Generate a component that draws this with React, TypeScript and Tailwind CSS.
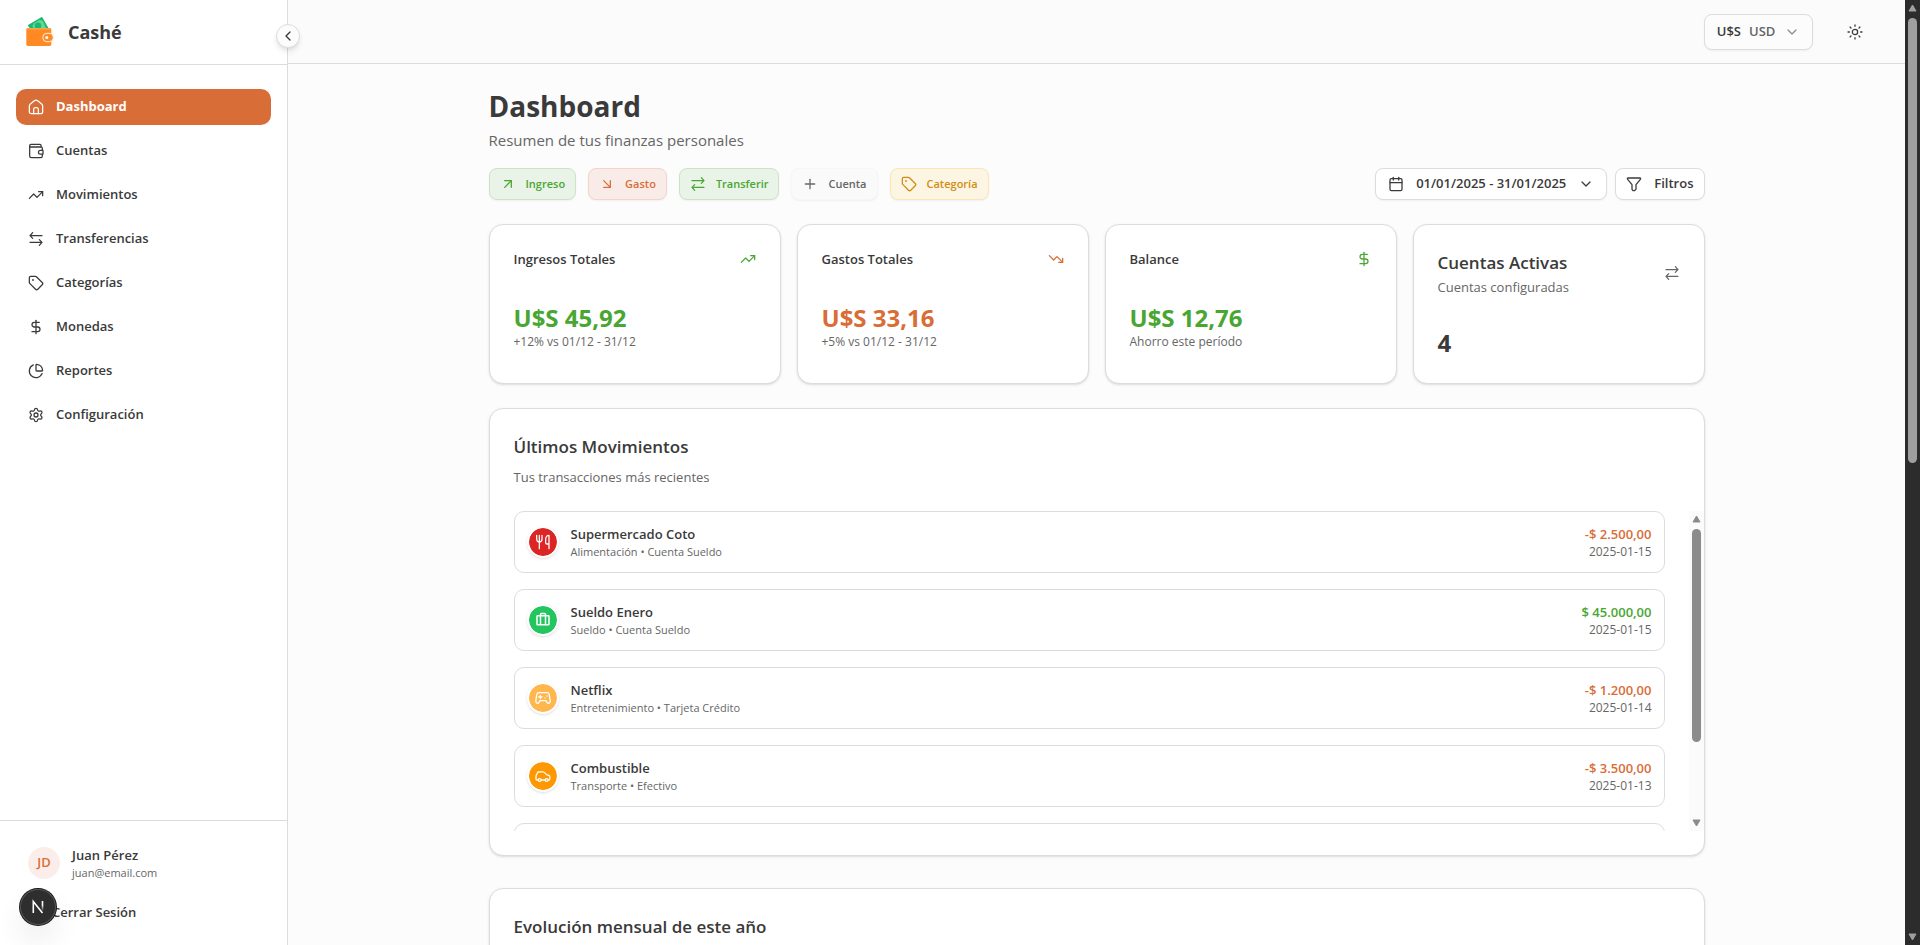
import React from 'react';
import {
  ArrowDownRight, ArrowUpRight, Calendar, ChartPie, ChevronDown, ChevronLeft, DollarSign,
  Plus, Settings, Tag, TrendingDown, TrendingUp,
} from 'lucide-react';
import { PiSuitcaseBold } from 'react-icons/pi';

type IconProps = { className?: string; children?: React.ReactNode };

function Line({ className = 'size-4', children }: IconProps) {
  return (
    <svg viewBox="0 0 24 24" fill="none" stroke="currentColor" strokeWidth="1.9" strokeLinecap="round" strokeLinejoin="round" className={className} aria-hidden="true">
      {children}
    </svg>
  );
}

const Home = (p: IconProps) => (
  <Line {...p}>
    <path d="M5 22a3 3 0 0 1-3-3v-8.300a4 4 0 0 1 1.500-3.100l6-4.800a4 4 0 0 1 5 0l6 4.800a4 4 0 0 1 1.500 3.100V19a3 3 0 0 1-3 3z" />
    <path d="M8.500 22v-6.500a2.500 2.500 0 0 1 2.500-2.500h2a2.500 2.500 0 0 1 2.500 2.500V22" />
  </Line>
);
const WalletIcon = (p: IconProps) => (
  <Line {...p}>
    <path d="M21.500 11V8a2 2 0 0 0-2-2H4.500a2 2 0 0 1 0-4H18a1.500 1.500 0 0 1 1.500 1.500V6M2.500 4v15.500a2.500 2.500 0 0 0 2.500 2.500h14a2.500 2.500 0 0 0 2.500-2.500V17" />
    <path d="M22.500 11.200v5.600h-4a2.800 2.800 0 0 1 0-5.600z" />
  </Line>
);
const SwapLeft = (p: IconProps) => (
  <Line {...p}>
    <path d="M21 7H3.500M7 2.500 3 7l4 4M3 17h17.500M17 13l4 4-4 4.500" />
  </Line>
);
const SwapRight = (p: IconProps) => (
  <Line {...p}>
    <path d="M3 7h17.500M17 2.500l4 4.500-4 4M21 17H3.500M7 13l-4 4 4 4.500" />
  </Line>
);
const SunIcon = (p: IconProps) => (
  <Line {...p}>
    <circle cx="12" cy="12" r="4" />
    <path d="M12 1.500v2M12 20.500v2M1.500 12h2M20.500 12h2M4.600 4.600 6 6M18 18l1.400 1.400M4.600 19.400 6 18M18 6l1.400-1.400" />
  </Line>
);
const FunnelIcon = (p: IconProps) => (
  <Line {...p}>
    <path d="M3 3h18a1 1 0 0 1 .8 1.600L15 13v7l-2.500 2h-2L9 20v-7L2.200 4.600A1 1 0 0 1 3 3z" />
  </Line>
);
const Cutlery = (p: IconProps) => (
  <Line {...p}>
    <path d="M2.500 2v6a4 4 0 0 0 8 0V2M6.500 2v20M21 15h-3a2 2 0 0 1-2-2V8c0-3.500 2-6 5-6zM21 15v7" />
  </Line>
);
const Gamepad = (p: IconProps) => (
  <Line {...p}>
    <path d="M6 4h12a3.500 3.500 0 0 1 3.400 2.800l1.300 9.200c.6 4-3 5.200-4.700 2.600L16.500 16h-9L6 18.600C4.300 21.200.7 20 1.300 16l1.300-9.200A3.500 3.500 0 0 1 6 4z" />
    <path d="M8 8v5M5.500 10.500h5M15 12h.01M18 9h.01" />
  </Line>
);
const Car = (p: IconProps) => (
  <Line {...p}>
    <path d="M4.500 18H3a1.500 1.500 0 0 1-1.500-1.500V12l2.300-5a2 2 0 0 1 1.800-1.200h6.200a3 3 0 0 1 2 .8l4 3.700 2.900.8a2 2 0 0 1 1.500 2v3.400a1.500 1.500 0 0 1-1.500 1.500h-.9M9.500 18h5.300" />
    <circle cx="7" cy="18" r="2.200" />
    <circle cx="17.500" cy="18" r="2.200" />
  </Line>
);

function Logo() {
  return (
    <svg viewBox="0 0 32 32" className="size-8" aria-hidden="true">
      <path d="M4.500 8.700 17.200 1.300a1 1 0 0 1 1.400.4L25 13H6.500L4 9.700a.8.8 0 0 1 .5-1z" fill="#1fb573" />
      <path d="M8.200 9.600c1.100-.5 1.500-1.300 1.400-2.200l6.200-3.600c.8.700 1.700.8 2.600.4L22.500 13H9.800z" fill="#5fdb8f" />
      <circle cx="14" cy="9.800" r="3.200" fill="#1fb573" />
      <rect x="2.300" y="12" width="25" height="18" rx="1.800" fill="#ff8a24" />
      <path d="M2.300 13.500A1.500 1.500 0 0 1 3.800 12h22a1.500 1.500 0 0 1 1.500 1.500v.3h-25z" fill="#f9a14b" />
      <rect x="18.800" y="17.300" width="10.500" height="8.400" rx="4" fill="#ff8a24" stroke="#fff1df" strokeWidth="1" />
      <circle cx="22.800" cy="21.500" r="1.500" fill="#fff" />
    </svg>
  );
}

const line = { strokeWidth: 1.9, className: 'size-4 shrink-0', 'aria-hidden': true } as const;

const nav = [
  { label: 'Dashboard', icon: <Home />, active: true },
  { label: 'Cuentas', icon: <WalletIcon /> },
  { label: 'Movimientos', icon: <TrendingUp {...line} /> },
  { label: 'Transferencias', icon: <SwapLeft /> },
  { label: 'Categorías', icon: <Tag {...line} /> },
  { label: 'Monedas', icon: <DollarSign {...line} /> },
  { label: 'Reportes', icon: <ChartPie {...line} /> },
  { label: 'Configuración', icon: <Settings {...line} /> },
];

function Sidebar() {
  return (
    <aside className="relative z-10 flex w-72 shrink-0 flex-col border-r border-[#dcdcdc] bg-white">
      <div className="flex h-[65px] items-center gap-3 border-b border-[#dcdcdc] px-6">
        <Logo />
        <span className="text-lg font-bold">Cashé</span>
      </div>
      <button aria-label="Contraer menú" className="absolute top-6 -right-[13px] flex size-6 items-center justify-center rounded-full border border-[#dcdcdc] bg-[#fcfcfc] shadow-md">
        <ChevronLeft className="size-4" strokeWidth={2} />
      </button>
      <nav className="flex flex-1 flex-col gap-2 px-4 py-6">
        {nav.map((n) => (
          <a
            key={n.label}
            href="#"
            className={
              n.active
                ? 'flex h-9 items-center gap-3 rounded-[10px] bg-[#d96d37] px-3 text-[13px] font-bold text-white'
                : 'flex h-9 items-center gap-3 rounded-[10px] px-3 text-[13px] font-semibold'
            }
          >
            {n.icon}
            {n.label}
          </a>
        ))}
      </nav>
      <div className="border-t border-[#dcdcdc] px-4 pt-4 pb-3.5">
        <div className="flex items-center gap-3 px-3 py-2">
          <span className="flex size-8 items-center justify-center rounded-full bg-[#fbeeea] text-[13px] font-semibold text-[#d96d37]">JD</span>
          <div>
            <p className="text-[13px] leading-5 font-semibold">Juan Pérez</p>
            <p className="text-[11px] leading-4 text-[#666]">juan@email.com</p>
          </div>
        </div>
        <button className="mt-1.5 flex h-9 w-full items-center pl-9 text-[13px] font-semibold">Cerrar Sesión</button>
      </div>
      <button aria-label="Herramientas de desarrollo" className="absolute bottom-5 left-5 flex size-9 items-center justify-center rounded-full bg-[#2e2e2e] shadow-[0_0_0_1px_#171717,inset_0_0_0_1px_#555,0_16px_32px_-8px_rgba(0,0,0,0.24)]">
        <svg viewBox="0 0 16 16" className="size-4" fill="none" aria-hidden="true">
          <defs>
            <linearGradient id="stem" x1="0" y1="2" x2="0" y2="12" gradientUnits="userSpaceOnUse">
              <stop offset="0.4" stopColor="#fff" />
              <stop offset="1" stopColor="#fff" stopOpacity="0" />
            </linearGradient>
          </defs>
          <path d="M3.300 14V2.500L12.500 14" stroke="#fff" strokeWidth="1.6" />
          <path d="M12.500 2v10" stroke="url(#stem)" strokeWidth="1.600" />
        </svg>
      </button>
    </aside>
  );
}

function Arrow({ down }: { down?: boolean }) {
  return (
    <svg viewBox="0 0 9 8" className="h-2 w-[9px] shrink-0" aria-hidden="true">
      <path d={down ? 'M1 1h7L4.500 7z' : 'M1 7h7L4.500 1z'} fill="currentColor" stroke="currentColor" strokeLinejoin="round" />
    </svg>
  );
}

const actions = [
  { label: 'Ingreso', icon: <ArrowUpRight {...line} />, tone: 'border-[#cae4c5] bg-[#e9f3e8] text-[#4aa632]' },
  { label: 'Gasto', icon: <ArrowDownRight {...line} />, tone: 'border-[#f4d3c8] bg-[#f9ece8] text-[#d96d37]' },
  { label: 'Transferir', icon: <SwapRight />, tone: 'border-[#cae4c5] bg-[#e9f3e8] text-[#4aa632]' },
  { label: 'Cuenta', icon: <Plus {...line} />, tone: 'border-[#f6f6f6] bg-[#fafafa] text-[#666]' },
  { label: 'Categoría', icon: <Tag {...line} />, tone: 'border-[#fae6b1] bg-[#fcf5e3] text-[#d08d12]' },
];

const stats = [
  { title: 'Ingresos Totales', value: 'U$S 45,92', note: '+12% vs 01/12 - 31/12', tone: 'text-[#4aa632]', icon: <TrendingUp {...line} /> },
  { title: 'Gastos Totales', value: 'U$S 33,16', note: '+5% vs 01/12 - 31/12', tone: 'text-[#d96d37]', icon: <TrendingDown {...line} /> },
  { title: 'Balance', value: 'U$S 12,76', note: 'Ahorro este período', tone: 'text-[#4aa632]', icon: <DollarSign {...line} /> },
];

const rows = [
  { name: 'Supermercado Coto', note: 'Alimentación • Cuenta Sueldo', amount: '-$ 2.500,00', date: '2025-01-15', bg: 'bg-[#dc2626]', icon: <Cutlery /> },
  { name: 'Sueldo Enero', note: 'Sueldo • Cuenta Sueldo', amount: '$ 45.000,00', date: '2025-01-15', bg: 'bg-[#22c55e]', icon: <PiSuitcaseBold className="size-4" /> },
  { name: 'Netflix', note: 'Entretenimiento • Tarjeta Crédito', amount: '-$ 1.200,00', date: '2025-01-14', bg: 'bg-[#ffb74d]', icon: <Gamepad /> },
  { name: 'Combustible', note: 'Transporte • Efectivo', amount: '-$ 3.500,00', date: '2025-01-13', bg: 'bg-[#ff9800]', icon: <Car /> },
];

const card = 'rounded-[14px] border border-[#dcdcdc] bg-white p-6 shadow-sm';

function Movements() {
  return (
    <section className={card}>
      <h2 className="text-[17px] leading-7 font-semibold">Últimos Movimientos</h2>
      <p className="mt-1.5 text-[13px] leading-5 text-[#666]">Tus transacciones más recientes</p>
      <div className="-mr-6 mt-6 flex h-80 gap-6">
        <ul className="flex flex-1 flex-col gap-4 overflow-y-auto [scrollbar-width:none]">
          {rows.map((r) => (
            <li key={r.name} className="flex shrink-0 items-center gap-3 rounded-[10px] border border-[#dcdcdc] p-3">
              <span className={`flex size-8 items-center justify-center rounded-full border-2 border-white bg-clip-padding text-white shadow-sm ${r.bg}`}>{r.icon}</span>
              <div className="flex-1">
                <p className="text-[13px] leading-5 font-semibold">{r.name}</p>
                <p className="text-[11px] leading-4 text-[#666]">{r.note}</p>
              </div>
              <div className="text-right">
                <p className={r.amount.startsWith('-') ? 'text-[13px] leading-5 font-semibold text-[#d96d37]' : 'text-[13px] leading-5 font-semibold text-[#4aa632]'}>{r.amount}</p>
                <p className="text-xs leading-4 text-[#666]">{r.date}</p>
              </div>
            </li>
          ))}
          <li aria-hidden="true" className="h-16 shrink-0 rounded-[10px] border border-[#dcdcdc]" />
        </ul>
        <div aria-hidden="true" className="flex w-[15px] flex-col items-center justify-between bg-[#fbfbfb] py-1 text-[#8b8b8b]">
          <Arrow />
          <div className="w-full flex-1 px-[3px] py-1.5">
            <div className="h-3/4 rounded-full bg-[#8b8b8b]" />
          </div>
          <Arrow down />
        </div>
      </div>
    </section>
  );
}

export default function App() {
  return (
    <div className="flex h-screen bg-[#fcfcfc] font-['Open_Sans','Noto_Sans',sans-serif] text-[#3a3a3a]">
      <Sidebar />
      <div className="flex min-w-0 flex-1 flex-col">
        <header className="flex h-16 shrink-0 items-center justify-end gap-6 border-b border-[#dcdcdc] bg-[#fbfbfb] px-8">
          <div className="relative flex h-9 items-center rounded-lg border border-[#dcdcdc] bg-[#fcfcfc] pl-3 text-[13px] font-semibold shadow-xs">
            <label htmlFor="currency">U$S</label>
            <select id="currency" className="h-full appearance-none bg-transparent pr-9 pl-2 text-[#666] outline-none">
              <option>USD</option>
            </select>
            <ChevronDown strokeWidth={1.9} className="pointer-events-none absolute right-3 size-4 text-[#8b8b8b]" />
          </div>
          <button aria-label="Cambiar tema" className="flex size-9 items-center justify-center">
            <SunIcon />
          </button>
        </header>
        <main className="flex-1 overflow-y-auto [scrollbar-width:none]">
          <div className="mx-auto max-w-7xl px-8 py-6">
            <h1 className="text-[28px] leading-9 font-bold">Dashboard</h1>
            <p className="mt-1 text-[15px] leading-6 text-[#666]">Resumen de tus finanzas personales</p>
            <div className="mt-4 flex items-center justify-between">
              <div className="flex gap-3">
                {actions.map((a) => (
                  <button key={a.label} className={`flex h-8 items-center gap-2.5 rounded-lg border px-2.5 text-[11px] font-semibold shadow-xs ${a.tone}`}>
                    {a.icon}
                    {a.label}
                  </button>
                ))}
              </div>
              <div className="flex gap-2 text-[13px] font-semibold">
                <button className="flex h-8 items-center gap-3 rounded-lg border border-[#dcdcdc] bg-white px-3 shadow-xs">
                  <Calendar {...line} />
                  01/01/2025 - 31/01/2025
                  <ChevronDown {...line} />
                </button>
                <button className="flex h-8 items-center gap-3 rounded-lg border border-[#dcdcdc] bg-white px-2.5 shadow-xs">
                  <FunnelIcon />
                  Filtros
                </button>
              </div>
            </div>
            <div className="mt-6 grid grid-cols-4 gap-4">
              {stats.map((s) => (
                <section key={s.title} className={card}>
                  <div className="flex items-center justify-between">
                    <h2 className="text-[13px] leading-5 font-semibold">{s.title}</h2>
                    <span className={s.tone}>{s.icon}</span>
                  </div>
                  <p className={`mt-[33px] text-2xl leading-8 font-bold ${s.tone}`}>{s.value}</p>
                  <p className="text-xs leading-4 text-[#666]">{s.note}</p>
                </section>
              ))}
              <section className={card}>
                <div className="flex items-center justify-between">
                  <div>
                    <h2 className="text-[17px] leading-7 font-semibold">Cuentas Activas</h2>
                    <p className="text-[13px] leading-5 text-[#666]">Cuentas configuradas</p>
                  </div>
                  <SwapRight className="size-4 text-[#666]" />
                </div>
                <p className="mt-[30px] text-2xl leading-8 font-bold">4</p>
              </section>
            </div>
            <div className="mt-6 flex flex-col gap-8">
              <Movements />
              <section className={card}>
                <h2 className="text-[17px] leading-7 font-semibold">Evolución mensual de este año</h2>
                <div className="h-80" />
              </section>
            </div>
          </div>
        </main>
      </div>
      <div aria-hidden="true" className="flex w-[15px] shrink-0 flex-col items-center bg-[#2c2c2c] py-1 text-[#9f9f9f]">
        <Arrow />
        <div className="w-full flex-1 px-[3px] py-1.5">
          <div className="h-[49%] rounded-full bg-[#9f9f9f]" />
        </div>
        <Arrow down />
      </div>
    </div>
  );
}
